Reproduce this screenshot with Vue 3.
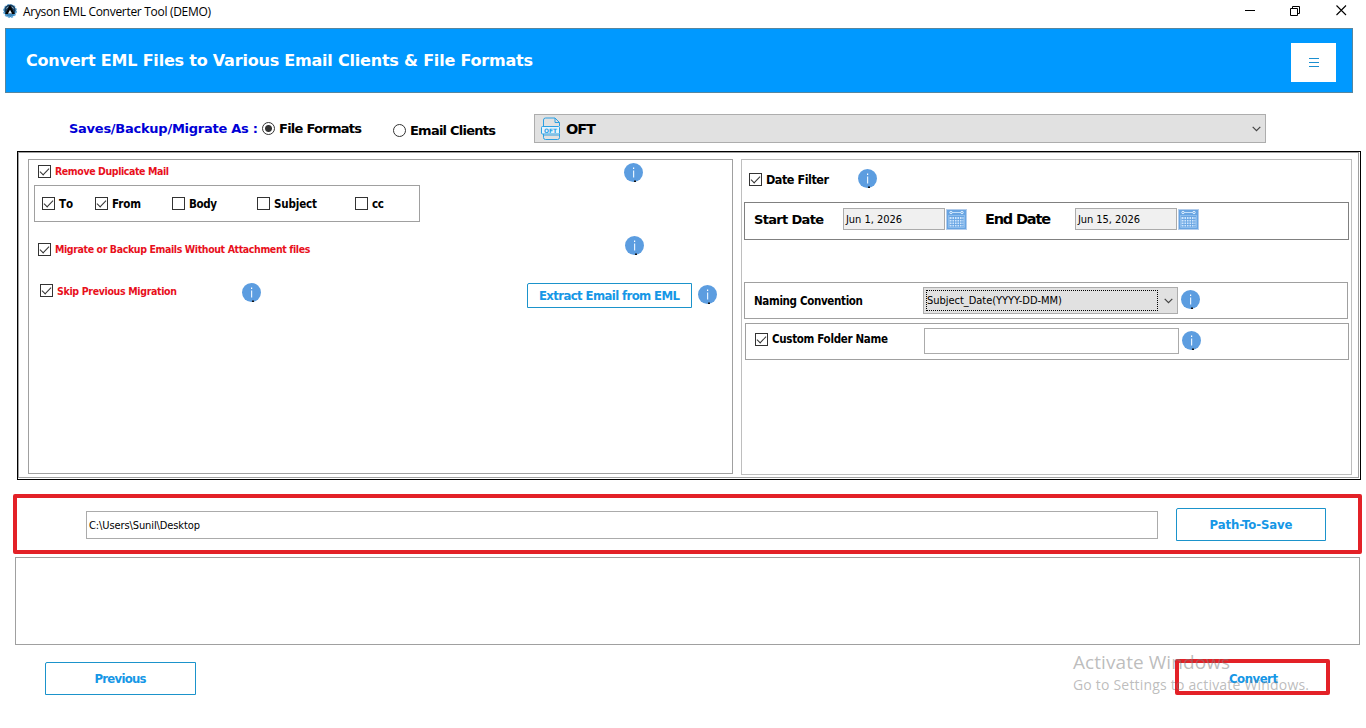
<template>
  <main class="window">
    <svg class="symbols" width="0" height="0">
      <symbol id="info" viewBox="0 0 19 19">
        <circle cx="9.5" cy="9.5" r="9.5" fill="#5c9de0" />
        <rect x="9" y="4.5" width="1.2" height="1.5" fill="#fff" />
        <rect x="9" y="7.5" width="1.2" height="7" fill="#e4f2ff" />
        <rect x="10" y="17.5" width="2" height="1.5" fill="#111" />
      </symbol>
      <symbol id="chevron" viewBox="0 0 9 6">
        <path d="M.7.8 4.5 4.6 8.3.8" fill="none" stroke="#444" stroke-width="1.2" />
      </symbol>
      <symbol id="calendar" viewBox="0 0 21 21">
        <rect width="21" height="21" fill="#b3cdec" />
        <rect x="1" y="1" width="19" height="19" fill="#68a4e2" />
        <path d="M6 3.5h9" stroke="#c4e0fa" />
        <path d="M2 6.5h17" stroke="#8bbcec" />
        <circle cx="5" cy="3.5" r="1.2" fill="#68a4e2" stroke="#e2f2ff" />
        <circle cx="16" cy="3.5" r="1.2" fill="#68a4e2" stroke="#e2f2ff" />
        <rect x="3.5" y="8" width="14" height="9.5" fill="#cfe6fd" />
        <path d="M3.5 10.5h14M3.500 13h14M3.500 15.500h14M6 8v10M8.500 8v10M11 8v10M13.500 8v10M16 8v10" stroke="#68a4e2" stroke-width=".9" />
        <path d="M2.500 7v11.500h16V7" fill="none" stroke="#8bbcec" />
      </symbol>
    </svg>

    <header class="titlebar">
      <svg class="logo" width="14" height="16" viewBox="0 0 14 16">
        <circle cx="7" cy="8" r="6.200" fill="#3b86bd" stroke="#62a8d8" stroke-width="1.600" stroke-dasharray="2 1.200" />
        <path d="M1.500 7a5.500 5.500 0 0 1 11 0l-1 4h-9z" fill="#173c5c" />
        <path d="M7 2 2.200 11h2.600L7 6.600 9.200 11h2.600z" fill="#050505" />
        <path d="M5 10.500 7 7l2 3.500z" fill="#f4fafd" />
        <path d="M3.400 5.500 5 3.700M10.600 5.500 9 3.700" stroke="#d5e8f3" stroke-width=".8" />
      </svg>
      <span v-fit="188" class="app-name">Aryson EML Converter Tool (DEMO)</span>
      <svg class="window-buttons" width="104" height="13" viewBox="0 0 104 13">
        <path d="M0 6.500h10M45.500 4.500h7v7h-7zM47.500 4.500v-2h7v7h-2" fill="none" stroke="#000" />
        <path d="m91.500 1.500 9.500 9.500m0-9.500-9.500 9.500" stroke="#000" stroke-width="1.100" />
      </svg>
    </header>

    <section class="banner">
      <h1 v-fit="507">Convert EML Files to Various Email Clients &amp; File Formats</h1>
      <button class="menu" aria-label="Menu"><i></i><i></i><i></i></button>
    </section>

    <section class="save-as">
      <span v-fit="189" class="save-label">Saves/Backup/Migrate As :</span>
      <label class="radio">
        <i class="dot on"></i><span v-fit="83">File Formats</span>
      </label>
      <label class="radio clients">
        <i class="dot"></i><span v-fit="86">Email Clients</span>
      </label>
      <div class="format-select">
        <svg class="oft" width="20" height="24" viewBox="0 0 20 24" fill="none" stroke="#2ba0e4">
          <path d="M2.500 9V3q0-2 2-2H14l4.500 4.500V9M14 1v4.500h4.500M2.500 17v3.500q0 2 2 2h12q2 0 2-2V17" />
          <rect x=".5" y="9.500" width="18" height="7.500" rx="1" fill="#e6f4fc" />
          <text x="3" y="15.500" fill="#2ba0e4" stroke="none" font-size="6" font-weight="700" textLength="13" lengthAdjust="spacingAndGlyphs">OFT</text>
          <path d="M2.500 18.500H18" opacity=".5" />
        </svg>
        <span v-fit="30">OFT</span>
        <svg class="arrow" width="9" height="6"><use href="#chevron" /></svg>
      </div>
    </section>

    <section class="options">
      <div class="options-inner">
        <div class="panel left">
          <div class="row duplicate">
            <i class="check on"></i><span v-fit="114" class="red">Remove Duplicate Mail</span>
            <svg class="info"><use href="#info" /></svg>
          </div>
          <div class="fields">
            <label v-for="f in fields" :key="f.name" :class="['field', f.name.toLowerCase()]">
              <i :class="['check', { on: f.checked }]"></i><span v-fit="f.width">{{ f.name }}</span>
            </label>
          </div>
          <div class="row attachments">
            <i class="check on"></i><span v-fit="255" class="red">Migrate or Backup Emails Without Attachment files</span>
            <svg class="info"><use href="#info" /></svg>
          </div>
          <div class="row skip">
            <i class="check on"></i><span v-fit="120" class="red">Skip Previous Migration</span>
            <svg class="info"><use href="#info" /></svg>
            <button class="btn extract"><span v-fit="141">Extract Email from EML</span></button>
            <svg class="info last"><use href="#info" /></svg>
          </div>
        </div>

        <div class="panel right">
          <div class="row date-filter">
            <i class="check on"></i><span v-fit="63">Date Filter</span>
            <svg class="info"><use href="#info" /></svg>
          </div>
          <div class="box dates">
            <span v-fit="70" class="start-label">Start Date</span>
            <div class="date"><span v-fit="56">Jun 1, 2026</span></div>
            <svg class="calendar"><use href="#calendar" /></svg>
            <span v-fit="66" class="end-label">End Date</span>
            <div class="date end"><span v-fit="62">Jun 15, 2026</span></div>
            <svg class="calendar"><use href="#calendar" /></svg>
          </div>
          <div class="box naming">
            <span v-fit="109" class="naming-label">Naming Convention</span>
            <div class="naming-select">
              <div class="focus"><span v-fit="135">Subject_Date(YYYY-DD-MM)</span></div>
              <svg class="arrow" width="9" height="6"><use href="#chevron" /></svg>
            </div>
            <svg class="info"><use href="#info" /></svg>
          </div>
          <div class="box folder">
            <i class="check on"></i><span v-fit="116">Custom Folder Name</span>
            <div class="folder-input"></div>
            <svg class="info"><use href="#info" /></svg>
          </div>
        </div>
      </div>
    </section>

    <section class="save-path">
      <div class="path-input"><span v-fit="111">C:\Users\Sunil\Desktop</span></div>
      <button class="btn path-btn"><span v-fit="83">Path-To-Save</span></button>
    </section>

    <section class="log"></section>

    <footer class="actions">
      <button class="btn previous"><span v-fit="52">Previous</span></button>
      <button class="convert"><span v-fit="49">Convert</span></button>
      <div class="watermark">
        <p><span v-fit="157">Activate Windows</span></p>
        <p class="small"><span v-fit="236">Go to Settings to activate Windows.</span></p>
      </div>
    </footer>
  </main>
</template>

<script setup>
const fields = [
  { name: "To", checked: true, width: 14 },
  { name: "From", checked: true, width: 29 },
  { name: "Body", checked: false, width: 28 },
  { name: "Subject", checked: false, width: 43 },
  { name: "cc", checked: false, width: 12 },
];

// Tracks a label so that it fills the given width in pixels
const vFit = {
  mounted(el, { value }) {
    const natural = el.getBoundingClientRect().width;
    const gaps = el.textContent.length - 1;
    const spacing = (value - natural) / gaps;
    el.style.letterSpacing = `${spacing.toFixed(3)}px`;
    el.style.marginRight = `${(-spacing).toFixed(3)}px`;
  },
};
</script>

<style>
body {
  margin: 0;
  background: #fff;
  overflow: hidden;
}
</style>

<style scoped>
.window {
  width: 1366px;
  height: 728px;
  overflow: hidden;
  background: #fff;
  color: #000;
  font-family: "DejaVu Sans", sans-serif;
  font-stretch: condensed;
  font-size: 11px;
  font-weight: 700;
}

.window * {
  box-sizing: border-box;
}

.symbols {
  position: absolute;
}

span,
h1 {
  display: block;
  flex: none;
  white-space: nowrap;
}

svg,
i,
button {
  display: block;
  flex: none;
}

button {
  padding: 0;
  font: inherit;
}

.titlebar {
  display: flex;
  align-items: flex-start;
  height: 28px;
  padding: 3px 0 0 3px;
}

.app-name {
  margin-left: 6px;
  font: 400 12px/17px "Open Sans", sans-serif;
}

.window-buttons {
  margin: 1px 17px 0 auto;
}

.banner {
  display: flex;
  align-items: center;
  justify-content: space-between;
  width: 1348px;
  height: 65px;
  margin-left: 5px;
  padding: 0 16px 0 20px;
  border: 1px solid #57869f;
  background: #0099ff;
  color: #fff;
}

h1 {
  margin: 0;
  font-size: 16px;
  font-stretch: normal;
}

.menu {
  display: flex;
  flex-direction: column;
  align-items: center;
  justify-content: center;
  gap: 3px;
  width: 45px;
  height: 39px;
  margin-top: 4px;
  border: 0;
  background: #fff;
}

.menu i {
  width: 10px;
  height: 1px;
  background: #1b8fd0;
}

.save-as {
  display: flex;
  align-items: center;
  height: 29px;
  margin-top: 21px;
  padding-left: 69px;
  font-size: 13px;
  font-stretch: normal;
}

.save-label {
  margin-top: -1px;
  color: #0000d6;
}

.radio {
  display: flex;
  align-items: center;
  margin-left: 4px;
  gap: 4px;
}

.clients {
  margin: 4px 0 0 31px;
}

.dot {
  width: 13px;
  height: 13px;
  border: 1px solid #333;
  border-radius: 50%;
}

.dot.on {
  background: radial-gradient(circle, #333 3px, #fff 4px);
}

.format-select {
  display: flex;
  align-items: center;
  width: 732px;
  height: 29px;
  margin-left: auto;
  margin-right: 100px;
  padding: 0 4px 0 6px;
  border: 1px solid #adadad;
  background: #e1e1e1;
  font-size: 14.5px;
}

.oft {
  margin-right: 5px;
}

.arrow {
  margin-left: auto;
}

.options {
  width: 1344px;
  height: 329px;
  margin: 8px 0 0 17px;
  border: 1px solid #000;
}

.options-inner {
  display: flex;
  gap: 8px;
  width: 1341px;
  height: 326px;
  padding: 6px 0 0 9px;
  border: 1px solid #a0a0a0;
}

.panel {
  flex: none;
  border: 1px solid #a0a0a0;
}

.left {
  width: 705px;
  height: 315px;
}

.right {
  width: 611px;
  height: 316px;
  border-color: #bebebe;
}

.row {
  display: flex;
  align-items: center;
  height: 19px;
}

.red {
  margin-left: 4px;
  color: #e8101c;
  font-size: 10.5px;
}

.check {
  width: 13px;
  height: 13px;
  border: 1px solid #333;
  background: #fff;
}

.check.on::before {
  content: "";
  display: block;
  width: 8px;
  height: 4px;
  margin: 2px 0 0 1px;
  border: solid #333;
  border-width: 0 0 1.4px 1.4px;
  transform: rotate(-46deg);
}

.info {
  width: 19px;
  height: 19px;
}

.duplicate {
  margin-top: 3px;
  padding-left: 9px;
}

.duplicate .check,
.duplicate .red {
  margin-top: -3px;
}

.duplicate .info {
  margin-left: 455px;
}

.fields {
  display: flex;
  align-items: center;
  width: 386px;
  height: 37px;
  margin: 3px 0 0 5px;
  padding-left: 7px;
  border: 1px solid #a0a0a0;
  font-size: 11.5px;
}

.field {
  display: flex;
  align-items: center;
  gap: 4px;
}

.to {
  width: 53px;
}

.from {
  width: 77px;
}

.body {
  width: 85px;
}

.subject {
  width: 98px;
}

.attachments {
  margin-top: 14px;
  padding-left: 9px;
}

.attachments .check,
.attachments .red {
  margin-top: 7px;
}

.attachments .info {
  margin-left: 315px;
}

.skip {
  height: 25px;
  margin-top: 28px;
  padding-left: 11px;
}

.skip .check,
.skip .red {
  margin-top: -10px;
}

.skip .info {
  margin: -6px 0 0 65px;
}

.skip .last {
  margin: -2px 0 0 6px;
}

.btn {
  display: flex;
  align-items: center;
  justify-content: center;
  border: 1px solid #1b93cb;
  border-top-left-radius: 2px;
  background: #fff;
  color: #1697e6;
  font-size: 13px;
}

.extract {
  width: 165px;
  height: 25px;
  margin-left: 266px;
}

.date-filter {
  margin-top: 9px;
  padding-left: 7px;
  font-size: 12.5px;
}

.date-filter .check {
  margin: 1px 4px 0 0;
}

.date-filter > span {
  margin-top: 2px;
}

.date-filter .info {
  margin-left: 29px;
}

.box {
  display: flex;
  align-items: center;
  width: 604px;
  height: 37px;
  margin-left: 2px;
  border: 1px solid #a0a0a0;
}

.dates {
  width: 605px;
  height: 38px;
  margin-top: 14px;
  padding: 0 0 4px 9px;
  border-color: #808080;
  font-size: 13px;
  font-stretch: normal;
}

.date {
  display: flex;
  align-items: center;
  width: 102px;
  height: 22px;
  margin-left: 19px;
  padding-left: 2px;
  border: 1px solid #ababab;
  background: #f0f0f0;
  font-size: 11px;
  font-stretch: condensed;
  font-weight: 400;
}

.date.end {
  margin-left: 24px;
}

.calendar {
  width: 21px;
  height: 21px;
  margin-left: 1px;
}

.end-label {
  margin-left: 18px;
  font-size: 14.5px;
}

.naming {
  margin-top: 42px;
  padding-left: 9px;
  font-size: 11.5px;
}

.naming-select {
  display: flex;
  align-items: center;
  width: 255px;
  height: 27px;
  margin-left: 60px;
  padding: 0 4px 0 2px;
  border: 1px solid #adadad;
  background: #e1e1e1;
  font-size: 11px;
  font-weight: 400;
}

.focus {
  display: flex;
  align-items: center;
  width: 232px;
  height: 21px;
  border: 1px dotted #000;
}

.naming .info {
  margin: -2px 0 0 3px;
}

.folder {
  margin: 4px 0 0 3px;
  padding-left: 9px;
  font-size: 11.5px;
}

.folder .check {
  margin: -4px 4px 0 0;
}

.folder > span {
  margin-top: -5px;
}

.folder-input {
  width: 255px;
  height: 26px;
  margin: -1px 0 0 36px;
  border: 1px solid #ababab;
}

.folder .info {
  margin: -2px 0 0 3px;
}

.save-path {
  display: flex;
  align-items: center;
  width: 1349px;
  height: 60px;
  margin: 14px 0 0 13px;
  padding-left: 69px;
  border: 4px solid #e32127;
  border-radius: 2px;
}

.path-input {
  display: flex;
  align-items: center;
  width: 1072px;
  height: 28px;
  margin-top: 2px;
  padding-left: 2px;
  border: 1px solid #ababab;
  font-weight: 400;
}

.path-btn {
  width: 150px;
  height: 33px;
  margin-left: 18px;
}

.log {
  width: 1345px;
  height: 88px;
  margin: 3px 0 0 15px;
  border: 1px solid #a0a0a0;
}

.actions {
  position: relative;
  display: flex;
  align-items: flex-start;
  height: 60px;
  padding: 14px 36px 0 45px;
}

.previous {
  width: 151px;
  height: 33px;
  margin-top: 3px;
}

.convert {
  display: flex;
  align-items: center;
  justify-content: center;
  width: 155px;
  height: 36px;
  margin-left: auto;
  padding: 3px 0 0 2px;
  border: 4px solid #e32127;
  border-radius: 2px;
  background: #fff;
  color: #1697e6;
  font-size: 13px;
}

/* activation notice laid over the footer */
.watermark {
  position: absolute;
  left: 1073px;
  top: 5px;
  color: rgba(125, 125, 125, 0.52);
  font-family: "Open Sans", sans-serif;
  font-size: 19px;
  font-stretch: normal;
  font-weight: 400;
}

.watermark p {
  display: flex;
  margin: 0;
  line-height: 25px;
}

.watermark .small {
  font-size: 14px;
  line-height: 20px;
}
</style>
